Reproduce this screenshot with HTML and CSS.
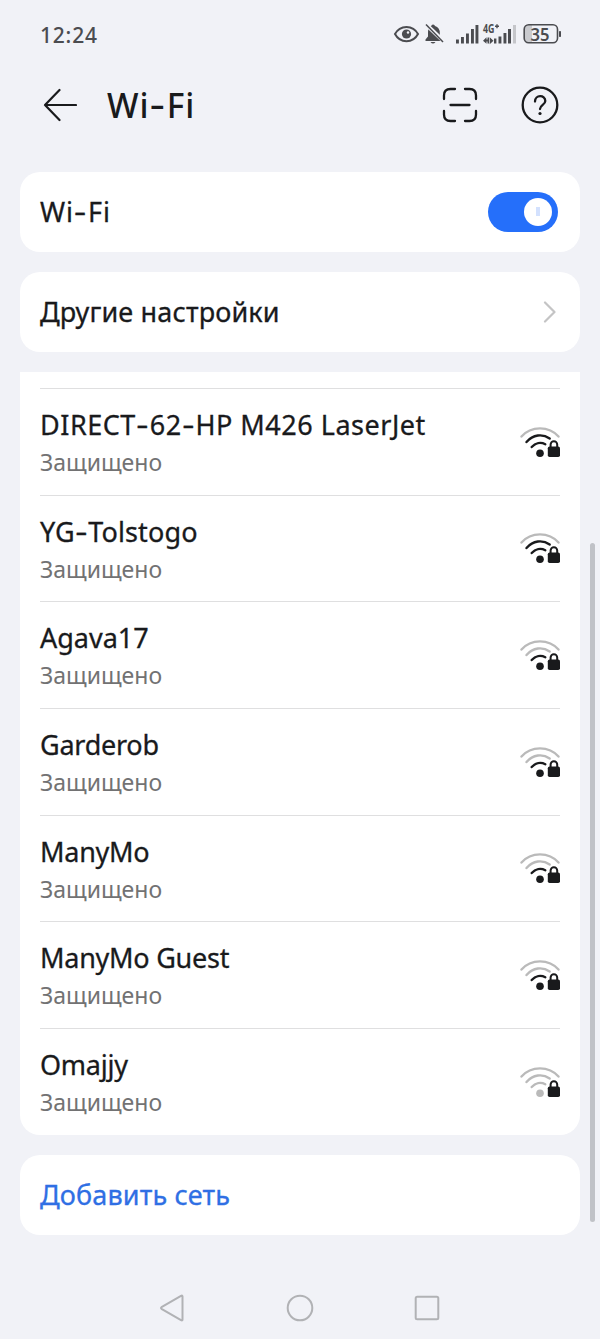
FILE: index.html
```html
<!DOCTYPE html>
<html lang="ru">
<head>
<meta charset="utf-8">
<title>Wi-Fi</title>
<link rel="stylesheet" href="styles.css">
</head>
<body>
<svg class="defs" aria-hidden="true">
  <symbol id="wifi" viewBox="0 0 40 31">
    <g fill="none" stroke-width="2.4" stroke-linecap="round">
      <path class="arc3" d="M1.500 9.500C11 -1.400 29 -1.400 38.500 9.500"/>
      <path class="arc2" d="M6.500 15C13 7.500 22.500 6.500 29.700 11.500"/>
      <path class="arc1" d="M11.700 20C15.500 15.800 20.800 14.900 25.300 17.200"/>
    </g>
    <circle class="dot" cx="20" cy="26.300" r="3.800"/>
    <rect x="27.800" y="19.500" width="12.200" height="10.500" rx="1.800" fill="#191a1c"/>
    <path d="M30.600 20V17.500a3.300 3.300 0 0 1 6.600 0V20" fill="none" stroke="#191a1c" stroke-width="2"/>
  </symbol>
</svg>
<div class="screen">
  <header class="status">
    <span class="time">12:24</span>
    <svg class="indicators" width="170" height="28" viewBox="0 0 170 28" fill="#4b4c50">
      <path d="M4 14C9 4.500 22 4.500 27 14C22 23.500 9 23.500 4 14Z" fill="none" stroke="#4b4c50" stroke-width="2"/>
      <circle cx="15.500" cy="14" r="4.600"/><circle cx="17" cy="12.500" r="1.200" fill="#f1f2f7"/>
      <path d="M42 4.500a2 2 0 0 1 2 1.500q4.800 1.500 4.800 7v3.500l2.500 3v1.500H34.500V19.500l2.500-3V12q0-4.500 3.200-6a2 2 0 0 1 1.800-1.500ZM39.500 22h5q-2.500 3-5 0Z"/>
      <path d="M34.500 4L53.500 22" stroke="#f1f2f7" stroke-width="4"/>
      <path d="M35 4.500L52 22" stroke="#4b4c50" stroke-width="1.500"/>
      <path d="M65 19.500h2.900v4H65zM70 17h2.900v6.500H70zM75 13.500h2.900v10H75zM80 9h2.900v14.500H80zM84.500 5H87.400v18.500h-2.900zM103 18.500h2.400v5H103zM107.500 16.500h2.900v7h-2.900zM112.500 13h2.900v10.500h-2.900zM117 9h3v14.500h-3z"/>
      <path d="M122 5h3v18.500h-3z" fill="#c5c6ca"/>
      <path d="M92 20.700l3.500-3.500v2.300h1v-2H98v6h-1.500v-2h-1v2.300zM98.700 17.200l3.800 3.500-3.800 3.500z"/>
      <text class="net" x="92" y="13.300" textLength="11.500" lengthAdjust="spacingAndGlyphs">4G</text>
      <path d="M104 6.300h4M106 4.300v4" stroke="#4b4c50" stroke-width="1.400"/>
      <path d="M137 5h4v17h-4q-3.500 0-3.500-3.500v-10Q133.500 5 137 5Z" fill="#c9cace"/>
      <rect x="133.200" y="4.700" width="33.300" height="18" rx="4.500" fill="none" stroke="#4b4c50" stroke-width="1.600"/>
      <rect x="168" y="11" width="2" height="6" rx=".7"/>
      <text class="charge" x="139.500" y="20.500" textLength="19" lengthAdjust="spacingAndGlyphs">35</text>
    </svg>
  </header>
  <div class="toolbar">
    <svg class="back" width="34" height="34" viewBox="0 0 34 34" fill="none" stroke="#191a1c" stroke-width="2.200" stroke-linecap="round" stroke-linejoin="round"><path d="M33 17H2M16.500 2L2 17l14.500 15"/></svg>
    <h1>Wi<span class="dash">-</span>Fi</h1>
    <svg class="scan" width="36" height="36" viewBox="0 0 36 36" fill="none" stroke="#191a1c" stroke-width="2.300" stroke-linecap="round"><path d="M13 2H8.500Q2 2 2 8.500V12M23 2h4.500Q34 2 34 8.500V12M13 34H8.500Q2 34 2 27.500V24M23 34h4.500Q34 34 34 27.500V24M8.500 18h19"/></svg>
    <svg class="help" width="38" height="38" viewBox="0 0 38 38" fill="none" stroke="#191a1c" stroke-width="2.300" stroke-linecap="round"><circle cx="19" cy="19" r="17.300"/><path d="M14 15.500c0-7 10.300-7 10.300-.5 0 3.800-5.300 4-5.300 8"/><circle cx="19" cy="27.500" r="1.600" fill="#191a1c" stroke="none"/></svg>
  </div>
  <main>
    <section class="card setting"><span class="label wifi-label">Wi<span class="dash">-</span>Fi</span><span class="switch"><span class="knob"></span></span></section>
    <section class="card setting"><span class="label loose">Другие настройки</span><svg class="chevron" width="13" height="22" viewBox="0 0 13 22" fill="none" stroke="#c4c4c5" stroke-width="2.200" stroke-linecap="round" stroke-linejoin="round"><path d="M2 1.500L11.500 11 2 20.500"/></svg></section>
    <ul class="card networks">
      <li class="level2"><div><p class="label wide">DIRECT<span class="dash">-</span>62<span class="dash">-</span>HP M426 LaserJet</p><p class="state">Защищено</p></div><svg class="signal"><use href="#wifi"/></svg></li>
      <li class="level2"><div><p class="label loose">YG<span class="dash">-</span>Tolstogo</p><p class="state">Защищено</p></div><svg class="signal"><use href="#wifi"/></svg></li>
      <li class="level1"><div><p class="label">Agava17</p><p class="state">Защищено</p></div><svg class="signal"><use href="#wifi"/></svg></li>
      <li class="level1"><div><p class="label tight">Garderob</p><p class="state">Защищено</p></div><svg class="signal"><use href="#wifi"/></svg></li>
      <li class="level1"><div><p class="label tight">ManyMo</p><p class="state">Защищено</p></div><svg class="signal"><use href="#wifi"/></svg></li>
      <li class="level1"><div><p class="label tight">ManyMo Guest</p><p class="state">Защищено</p></div><svg class="signal"><use href="#wifi"/></svg></li>
      <li class="level0"><div><p class="label tight">Omajjy</p><p class="state">Защищено</p></div><svg class="signal"><use href="#wifi"/></svg></li>
    </ul>
    <section class="card setting"><span class="label loose add">Добавить сеть</span></section>
  </main>
  <nav>
    <svg width="28" height="28" viewBox="0 0 28 28"><path d="M2.500 13.200L22 1.800Q23.500 1 23.500 2.500v23q0 1.500-1.500 .7L2.500 14.800Q1.500 14 2.500 13.200Z"/></svg>
    <svg width="28" height="28" viewBox="0 0 28 28"><circle cx="14" cy="14" r="12.300"/></svg>
    <svg width="28" height="28" viewBox="0 0 28 28"><rect x="2.700" y="2.700" width="22.600" height="22.600" rx="1.500"/></svg>
  </nav>
  <div class="scrollbar"></div>
</div>
</body>
</html>
```
FILE: styles.css
```css
* { box-sizing: border-box; }
body { margin: 0; background: #f1f2f7; font-family: "Noto Sans", sans-serif; color: #191a1c; }
.defs { position: absolute; width: 0; height: 0; }
.screen { position: relative; width: 600px; height: 1339px; overflow: hidden; display: flex; flex-direction: column; }
.status { height: 70px; padding: 0 39px 2px 40px; display: flex; align-items: center; justify-content: space-between; }
.indicators { margin-right: 0.500px; }
.time { padding-top: 1px; font-size: 21px; font-weight: 500; color: #4b4c50; letter-spacing: 0.8px; }
.net { font-size: 12.500px; font-weight: 700; }
.charge { font-size: 18.500px; font-weight: 600; }
.toolbar { height: 70px; padding: 0 41px 0 43px; display: flex; align-items: center; }
h1 { margin: 0 0 0 30px; font-size: 33.500px; line-height: 44px; font-weight: 500; letter-spacing: 0.9px; white-space: nowrap; }
.dash { display: inline-block; margin: 0 0.080em 0 0.090em; transform: translateY(-0.040em) scaleX(1.400); }
.scan { margin-left: auto; }
.help { margin-left: 43px; }
main { padding: 31.500px 20px 0; display: flex; flex-direction: column; gap: 20px; }
.card { background: #fff; border-radius: 20px; }
.setting { height: 80px; padding: 0 22px 0 20px; display: flex; align-items: center; justify-content: space-between; }
.label { font-size: 27px; font-weight: 450; line-height: 36px; white-space: nowrap; -webkit-text-stroke: 0.300px currentColor; }
.loose { letter-spacing: 0.150px; }
.wide { letter-spacing: 0.520px; }
.tight { letter-spacing: -0.250px; }
.wifi-label { letter-spacing: 0.900px; }
.switch { width: 70px; height: 40px; padding: 6px; border-radius: 20px; background: #256ffa; display: flex; justify-content: flex-end; }
.knob { width: 28px; height: 28px; border-radius: 50%; background: linear-gradient(#d3e1fe, #d3e1fe) center / 4px 9px no-repeat #fff; }
.chevron { margin-right: 2px; }
.networks { margin: 0; padding: 16.500px 20px 0; list-style: none; border-radius: 0 0 20px 20px; height: 763.800px; }
.networks li { height: 106.700px; border-top: 1px solid #dfdfe0; display: flex; justify-content: space-between; }
.networks li > div { padding-top: 18px; }
p { margin: 0; }
.state { margin-top: 2px; font-size: 23px; line-height: 34px; color: #727273; white-space: nowrap; }
.signal { width: 40px; height: 31px; margin-top: 37.500px; }
.arc3 { stroke: #bababa; }
.arc2 { stroke: var(--upper); }
.arc1 { stroke: var(--lower); }
.dot { fill: var(--lower); }
.level2 { --lower: #191a1c; --upper: #191a1c; }
.level1 { --lower: #191a1c; --upper: #bababa; }
.level0 { --lower: #bababa; --upper: #bababa; }
.add { color: #2f6fe4; }
nav { margin-top: 58.700px; padding: 0 159px; display: flex; justify-content: space-between; }
nav svg { fill: none; stroke: #b1b2b5; stroke-width: 2; }
.scrollbar { position: absolute; right: 5px; top: 543px; width: 5px; height: 679px; border-radius: 3px; background: #c0c2c7; }
```
